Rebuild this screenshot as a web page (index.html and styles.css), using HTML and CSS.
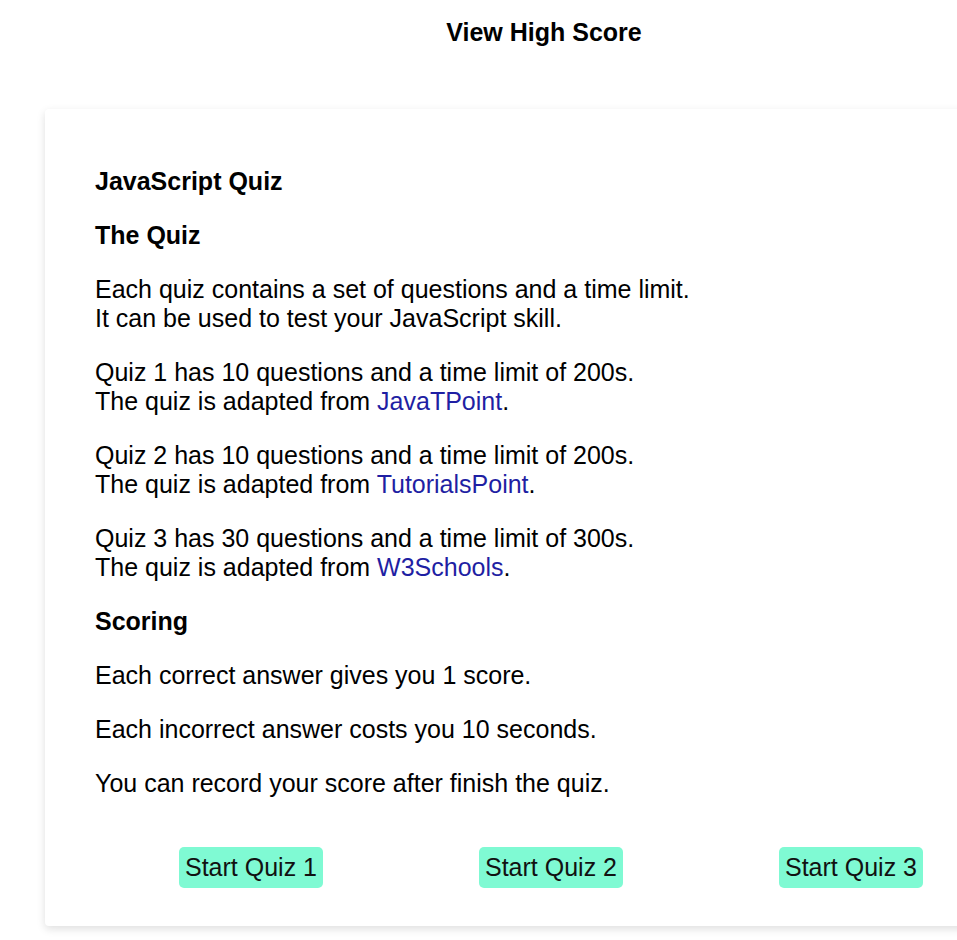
FILE: index.html
```html
<!DOCTYPE html>
<html lang="en">
<head>
<meta charset="utf-8">
<title>JavaScript Quiz</title>
<link rel="stylesheet" href="styles.css">
</head>
<body>
<div class="frame">
<div class="page">
  <header class="top">
    <a class="highscore">View High Score</a>
  </header>
  <main class="card">
    <h2 class="title">JavaScript Quiz</h2>
    <h3 class="heading">The Quiz</h3>
    <p>Each quiz contains a set of questions and a time limit.<br>It can be used to test your JavaScript skill.</p>
    <p>Quiz 1 has 10 questions and a time limit of 200s.<br>The quiz is adapted from <a class="link">JavaTPoint</a>.</p>
    <p>Quiz 2 has 10 questions and a time limit of 200s.<br>The quiz is adapted from <a class="link">TutorialsPoint</a>.</p>
    <p>Quiz 3 has 30 questions and a time limit of 300s.<br>The quiz is adapted from <a class="link">W3Schools</a>.</p>
    <h3 class="heading">Scoring</h3>
    <p>Each correct answer gives you 1 score.</p>
    <p>Each incorrect answer costs you 10 seconds.</p>
    <p>You can record your score after finish the quiz.</p>
    <div class="buttons">
      <button class="start">Start Quiz 1</button>
      <button class="start">Start Quiz 2</button>
      <button class="start">Start Quiz 3</button>
    </div>
  </main>
</div>
</div>
</body>
</html>
```

FILE: styles.css
```css
html {
  overflow: hidden;
}
body {
  margin: 0;
  font-family: "Liberation Sans", Arial, sans-serif;
  color: #000;
  background: #fff;
}
.frame {
  width: 100%;
  overflow: hidden;
  padding-bottom: 12px;
}
.page {
  width: 1088px;
}
.top {
  display: flex;
  justify-content: center;
  padding-top: 18px;
  height: 109px;
  box-sizing: border-box;
}
.highscore {
  font-weight: bold;
  font-size: 25px;
  line-height: 29px;
}
.card {
  margin: 0 45px;
  padding: 58px 50px 38px;
  background: #fff;
  border-radius: 4px;
  box-shadow: 0 3px 8px rgba(0, 0, 0, 0.13);
}
.title, .heading {
  font-size: 25px;
  line-height: 29px;
  font-weight: bold;
  margin: 0 0 25px;
}
p {
  font-size: 25px;
  line-height: 29px;
  margin: 0 0 25px;
}
.link {
  color: #1f1fa3;
}
.buttons {
  display: flex;
  gap: 156px;
  padding-left: 84px;
  margin-top: 49px;
}
.start {
  width: 144px;
  height: 41px;
  padding: 0;
  border: none;
  border-radius: 5px;
  background: #7ffad3;
  color: #111;
  font-family: "Liberation Sans", Arial, sans-serif;
  font-size: 25px;
}
```
